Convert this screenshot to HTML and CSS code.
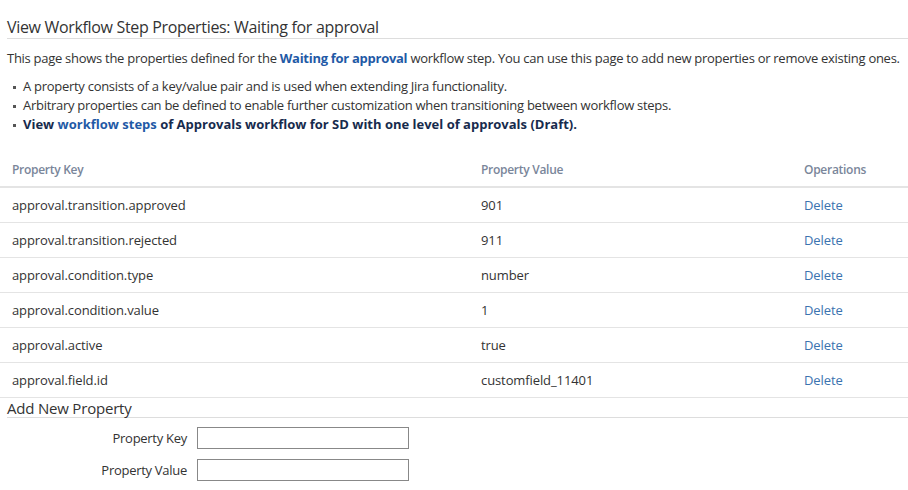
FILE: index.html
```html
<!DOCTYPE html>
<html>
<head>
<meta charset="utf-8">
<link rel="stylesheet" href="styles.css">
</head>
<body>
<div class="page">
  <h2 class="title">View Workflow Step Properties: Waiting for approval</h2>
  <p class="intro">This page shows the properties defined for the <a class="strong-link" href="#">Waiting for approval</a> workflow step. You can use this page to add new properties or remove existing ones.</p>
  <ul class="notes">
    <li>A property consists of a key/value pair and is used when extending Jira functionality.</li>
    <li>Arbitrary properties can be defined to enable further customization when transitioning between workflow steps.</li>
    <li class="bold">View <a class="link" href="#">workflow steps</a> of Approvals workflow for SD with one level of approvals (Draft).</li>
  </ul>
  <table class="props">
    <thead>
      <tr><th class="c1">Property Key</th><th class="c2">Property Value</th><th class="c3">Operations</th></tr>
    </thead>
    <tbody>
      <tr><td>approval.transition.approved</td><td>901</td><td><a class="link" href="#">Delete</a></td></tr>
      <tr><td>approval.transition.rejected</td><td>911</td><td><a class="link" href="#">Delete</a></td></tr>
      <tr><td>approval.condition.type</td><td>number</td><td><a class="link" href="#">Delete</a></td></tr>
      <tr><td>approval.condition.value</td><td>1</td><td><a class="link" href="#">Delete</a></td></tr>
      <tr><td>approval.active</td><td>true</td><td><a class="link" href="#">Delete</a></td></tr>
      <tr><td>approval.field.id</td><td>customfield_11401</td><td><a class="link" href="#">Delete</a></td></tr>
    </tbody>
  </table>
  <h3 class="subtitle">Add New Property</h3>
  <form class="addform">
    <div class="field"><label class="lbl">Property Key</label><input class="inp" type="text"></div>
    <div class="field"><label class="lbl">Property Value</label><input class="inp" type="text"></div>
  </form>
</div>
</body>
</html>
```

FILE: styles.css
```css
html, body {
  margin: 0;
  padding: 0;
  background: #fff;
}
body {
  font-family: "Open Sans", "Noto Sans", sans-serif;
  font-size: 13px;
  letter-spacing: -0.28px;
  color: #333;
}
.page {
  padding-top: 16px;
}
.title {
  margin: 0 0 0 7px;
  font-size: 16px;
  font-weight: 400;
  letter-spacing: -0.33px;
  line-height: 22px;
  padding-bottom: 0;
  border-bottom: 1px solid #ddd;
  color: #333;
}
.intro {
  margin: 10px 0 0 7px;
  line-height: 19px;
  white-space: nowrap;
}
.strong-link {
  color: #1f5aa6;
  font-weight: 700;
  text-decoration: none;
}
.link {
  color: #3b73af;
  text-decoration: none;
}
.notes {
  margin: 9px 0 0 7px;
  padding: 0 0 0 16px;
  line-height: 19px;
  list-style: none;
}
.notes li {
  position: relative;
  white-space: nowrap;
}
.notes li::before {
  content: "";
  position: absolute;
  left: -10px;
  top: 9px;
  width: 3px;
  height: 3px;
  background: #555;
}
.notes .bold {
  font-weight: 700;
  color: #172b4d;
  letter-spacing: 0;
}
.notes .bold .link {
  color: #1f5aa6;
}
.props {
  width: 100%;
  border-collapse: collapse;
  margin-top: 18px;
}
.props th {
  text-align: left;
  font-weight: 600;
  color: #7a869a;
  font-size: 12px;
  height: 34px;
  padding: 0 0 0 12px;
  border-bottom: 2px solid #e4e4e4;
  vertical-align: middle;
}
.props td {
  height: 34px;
  padding: 0 0 0 12px;
  border-bottom: 1px solid #e4e4e4;
  vertical-align: middle;
  letter-spacing: -0.1px;
}
.props .c1 { width: 457px; }
.props .c2 { width: 311px; }
.subtitle {
  margin: 1px 0 0 7px;
  font-size: 15px;
  font-weight: 400;
  letter-spacing: -0.2px;
  line-height: 18px;
  border-bottom: 1px solid #ddd;
}
.addform {
  padding-top: 9px;
}
.field {
  display: flex;
  align-items: center;
  margin-bottom: 10px;
}
.lbl {
  width: 197px;
  text-align: right;
  padding-right: 10px;
  box-sizing: border-box;
}
.inp {
  width: 212px;
  height: 22px;
  box-sizing: border-box;
  border: 1px solid #888;
  margin: 0;
  padding: 0 3px;
  font: inherit;
}
```
